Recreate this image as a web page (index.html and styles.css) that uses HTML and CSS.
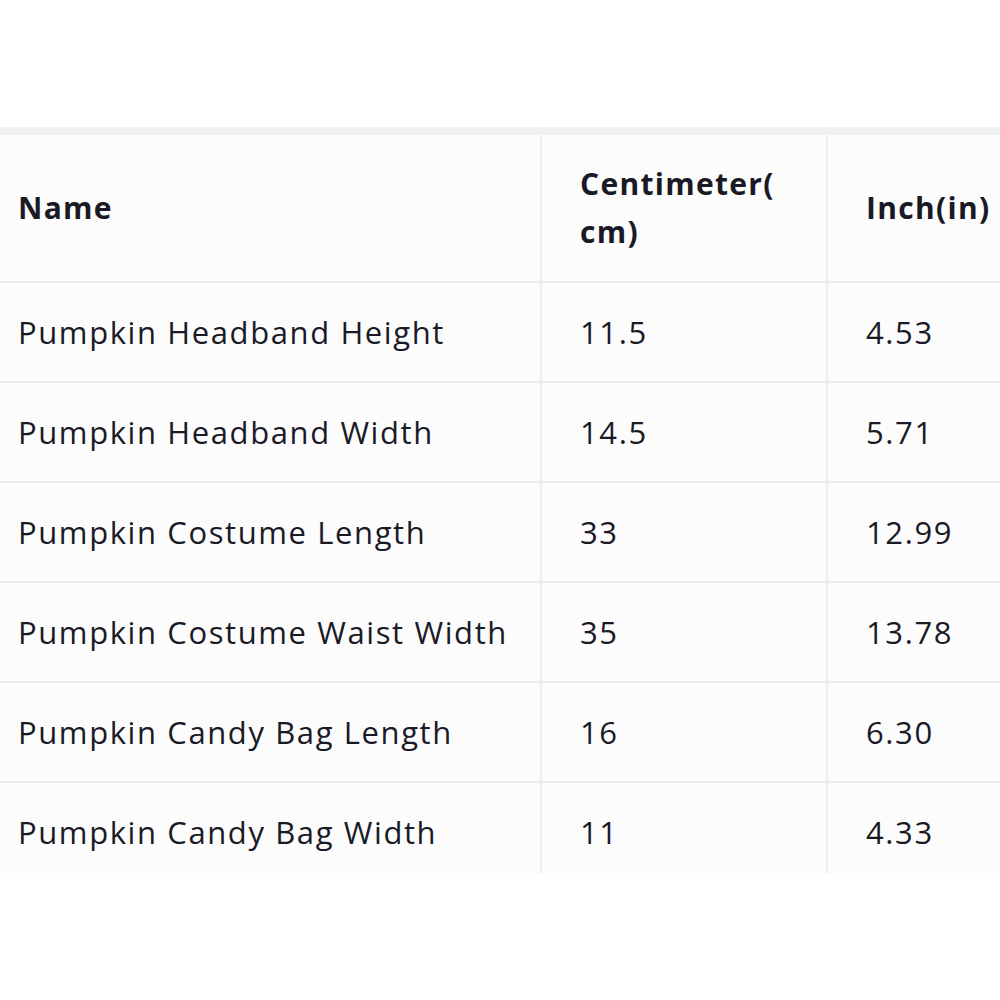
FILE: index.html
```html
<!DOCTYPE html>
<html>
<head>
<meta charset="utf-8">
<link rel="stylesheet" href="styles.css">
</head>
<body>
<div class="frame">
<table class="size-table">
  <colgroup>
    <col class="c1"><col class="c2"><col class="c3">
  </colgroup>
  <thead>
    <tr><th>Name</th><th class="wrap">Centimeter(<wbr>cm)</th><th>Inch(in)</th></tr>
  </thead>
  <tbody>
    <tr><td>Pumpkin Headband Height</td><td>11.5</td><td>4.53</td></tr>
    <tr><td>Pumpkin Headband Width</td><td>14.5</td><td>5.71</td></tr>
    <tr><td>Pumpkin Costume Length</td><td>33</td><td>12.99</td></tr>
    <tr><td>Pumpkin Costume Waist Width</td><td>35</td><td>13.78</td></tr>
    <tr><td>Pumpkin Candy Bag Length</td><td>16</td><td>6.30</td></tr>
    <tr><td>Pumpkin Candy Bag Width</td><td>11</td><td>4.33</td></tr>
  </tbody>
</table>
</div>
</body>
</html>
```
FILE: styles.css
```css
html, body {
  margin: 0;
  padding: 0;
  background: #ffffff;
}
body {
  padding-top: 127px;
  font-family: "Open Sans", "Noto Sans", sans-serif;
  color: #1a1a26;
}
.frame {
  width: 1000px;
  height: 746px;
  overflow: hidden;
  border-top: 8px solid #eef0f1;
  box-sizing: border-box;
}
.size-table {
  border-collapse: collapse;
  table-layout: fixed;
  width: 1140px;
  background: #fcfcfc;
}
.c1 { width: 541px; }
.c2 { width: 286px; }
.c3 { width: 313px; }
.size-table th,
.size-table td {
  font-size: 31px;
  letter-spacing: 1.6px;
  text-align: left;
  vertical-align: middle;
  padding: 0 40px 0 38px;
  border-left: 2px solid #ececec;
  border-top: 2px solid #ececec;
  line-height: 48px;
  white-space: nowrap;
}
.size-table th {
  height: 146px;
  border-top: none;
  font-weight: 700;
  font-size: 30px;
  letter-spacing: 1.3px;
}
.size-table td {
  height: 98px;
}
.size-table th:first-child,
.size-table td:first-child {
  border-left: none;
  padding-left: 18px;
}
.size-table .wrap {
  white-space: normal;
}
```
